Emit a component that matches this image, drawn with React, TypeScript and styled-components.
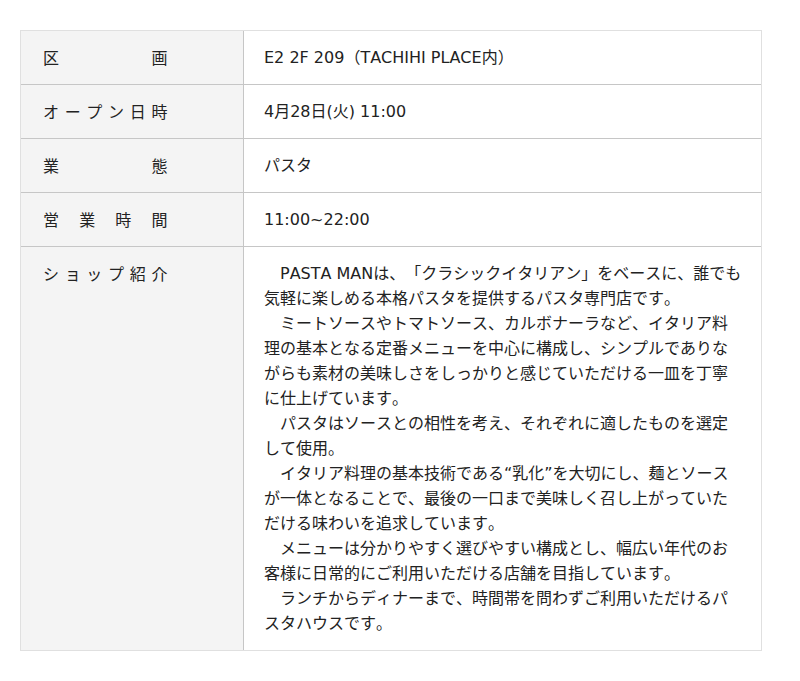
import React, { FC } from 'react';
import styled, { createGlobalStyle } from 'styled-components';

const ink = '#222222';
const labelBg = '#f4f4f4';
const outerLine = '#e0e0e0';
const innerLine = '#c6c6c6';

const GlobalStyle = createGlobalStyle`
  html, body {
    margin: 0;
    padding: 0;
    background: #ffffff;
  }
  body {
    color: ${ink};
    font-family: "DejaVu Sans", "Noto Sans CJK JP", sans-serif;
    -webkit-font-smoothing: antialiased;
    // full-width punctuation and kana at their full advance, as in the reference
    font-kerning: none;
    text-spacing-trim: space-all;
  }
`;

const $Page = styled.div`
  padding: 30px 0 30px 20px;
`;

const $Table = styled.dl`
  box-sizing: border-box;
  border: 1px solid ${outerLine};
  display: grid;
  grid-template-columns: 222px 1fr;
  margin: 0;
  width: 742px;
`;

const $Label = styled.dt<{ $first?: boolean }>`
  background-color: ${labelBg};
  border-top: ${({ $first }) => ($first ? 'none' : `1px solid ${innerLine}`)};
  font-family: "Noto Sans CJK JP", sans-serif;
  font-size: 16px;
  line-height: 25px;
  padding: 14px 0 14px 22px;
`;

const $LabelText = styled.span`
  display: block;
  letter-spacing: 0.35em;
  text-align: justify;
  text-align-last: justify;
  width: 130px;
`;

const $Value = styled.dd<{ $first?: boolean }>`
  border-left: 1px solid ${innerLine};
  border-top: ${({ $first }) => ($first ? 'none' : `1px solid ${innerLine}`)};
  font-size: 16px;
  line-height: 25px;
  margin: 0;
  padding: 14px 18px 14px 20px;
`;

const $Paragraph = styled.p`
  margin: 0;
  text-indent: 1em;
`;

interface IRow {
  label: string;
  value: React.ReactNode;
}

const intro = [
  'PASTA MANは、「クラシックイタリアン」をベースに、誰でも気軽に楽しめる本格パスタを提供するパスタ専門店です。',
  'ミートソースやトマトソース、カルボナーラなど、イタリア料理の基本となる定番メニューを中心に構成し、シンプルでありながらも素材の美味しさをしっかりと感じていただける一皿を丁寧に仕上げています。',
  'パスタはソースとの相性を考え、それぞれに適したものを選定して使用。',
  'イタリア料理の基本技術である“乳化”を大切にし、麺とソースが一体となることで、最後の一口まで美味しく召し上がっていただける味わいを追求しています。',
  'メニューは分かりやすく選びやすい構成とし、幅広い年代のお客様に日常的にご利用いただける店舗を目指しています。',
  'ランチからディナーまで、時間帯を問わずご利用いただけるパスタハウスです。',
];

const rows: IRow[] = [
  { label: '区画', value: 'E2 2F 209（TACHIHI PLACE内）' },
  { label: 'オープン日時', value: '4月28日(火) 11:00' },
  { label: '業態', value: 'パスタ' },
  { label: '営業時間', value: '11:00~22:00' },
  {
    label: 'ショップ紹介',
    value: intro.map((text, index) => <$Paragraph key={index}>{text}</$Paragraph>),
  },
];

const ShopTable: FC<{ rows: IRow[] }> = ({ rows }) => (
  <$Table>
    {rows.map((row, index) => (
      <React.Fragment key={index}>
        <$Label $first={index === 0}>
          <$LabelText>{row.label}</$LabelText>
        </$Label>
        <$Value $first={index === 0}>{row.value}</$Value>
      </React.Fragment>
    ))}
  </$Table>
);

const App: FC = () => (
  <>
    <GlobalStyle />
    <$Page>
      <ShopTable rows={rows} />
    </$Page>
  </>
);

export default App;
